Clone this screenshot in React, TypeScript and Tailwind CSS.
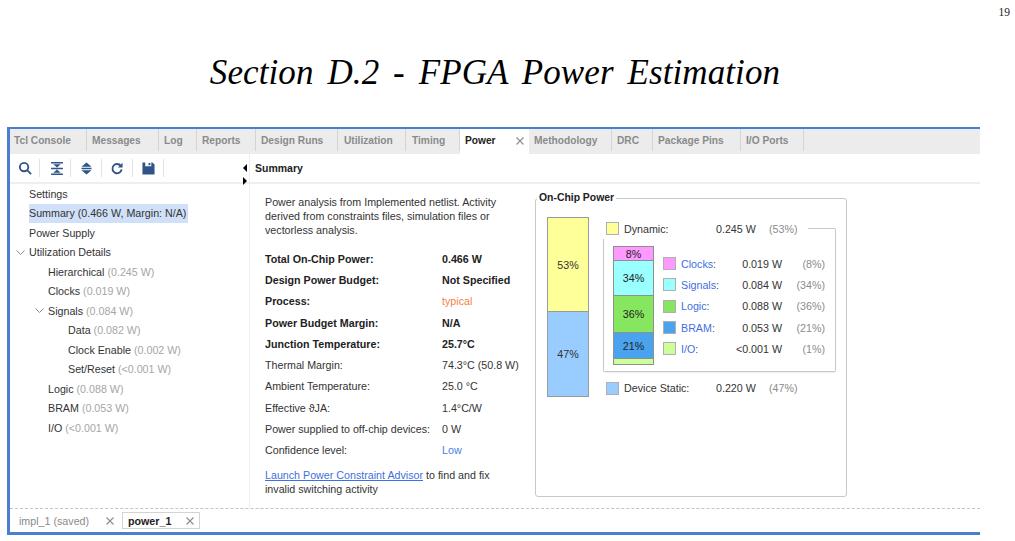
const tabs = [
  { name: "Tcl Console", w: "w-[77px] pl-[4px]" },
  { name: "Messages", w: "w-[72px] pl-[5px]" },
  { name: "Log", w: "w-[38px] pl-[5px]" },
  { name: "Reports", w: "w-[59px] pl-[5px]" },
  { name: "Design Runs", w: "w-[82px] pl-[5px]" },
  { name: "Utilization", w: "w-[68px] pl-[6px]" },
  { name: "Timing", w: "w-[54px] pl-[6px]" },
];

const tabsAfter = [
  { name: "Methodology", w: "w-[83px] pl-[5px]" },
  { name: "DRC", w: "w-[41px] pl-[5px]" },
  { name: "Package Pins", w: "w-[88px] pl-[5px]" },
  { name: "I/O Ports", w: "w-[63px] pl-[5px]" },
];

const tree = [
  { label: "Settings", indent: "pl-[19px]" },
  { label: "Summary (0.466 W, Margin: N/A)", indent: "pl-[19px]", selected: true },
  { label: "Power Supply", indent: "pl-[19px]" },
  { label: "Utilization Details", indent: "pl-[19px]", open: true },
  { label: "Hierarchical", note: "(0.245 W)", indent: "pl-[38px]" },
  { label: "Clocks", note: "(0.019 W)", indent: "pl-[38px]" },
  { label: "Signals", note: "(0.084 W)", indent: "pl-[38px]", open: true },
  { label: "Data", note: "(0.082 W)", indent: "pl-[58px]" },
  { label: "Clock Enable", note: "(0.002 W)", indent: "pl-[58px]" },
  { label: "Set/Reset", note: "(<0.001 W)", indent: "pl-[58px]" },
  { label: "Logic", note: "(0.088 W)", indent: "pl-[38px]" },
  { label: "BRAM", note: "(0.053 W)", indent: "pl-[38px]" },
  { label: "I/O", note: "(<0.001 W)", indent: "pl-[38px]" },
];

const summaryRows = [
  { k: "Total On-Chip Power:", v: "0.466 W", bold: true },
  { k: "Design Power Budget:", v: "Not Specified", bold: true },
  { k: "Process:", v: "typical", bold: true, tone: "font-normal text-[#f77f3f]" },
  { k: "Power Budget Margin:", v: "N/A", bold: true },
  { k: "Junction Temperature:", v: "25.7°C", bold: true },
  { k: "Thermal Margin:", v: "74.3°C (50.8 W)" },
  { k: "Ambient Temperature:", v: "25.0 °C" },
  { k: "Effective ϑJA:", v: "1.4°C/W" },
  { k: "Power supplied to off-chip devices:", v: "0 W" },
  { k: "Confidence level:", v: "Low", tone: "text-[#3f7fe8]" },
];

const dynamicRows = [
  { name: "Clocks", value: "0.019 W", pct: "(8%)", color: "bg-[#ff99ff]" },
  { name: "Signals", value: "0.084 W", pct: "(34%)", color: "bg-[#99ffff]" },
  { name: "Logic", value: "0.088 W", pct: "(36%)", color: "bg-[#86e65f]" },
  { name: "BRAM", value: "0.053 W", pct: "(21%)", color: "bg-[#4aa3ee]" },
  { name: "I/O", value: "<0.001 W", pct: "(1%)", color: "bg-[#ccff99]" },
];

const stack = [
  { label: "8%", color: "bg-[#ff99ff]", h: "h-[14px]" },
  { label: "34%", color: "bg-[#99ffff]", h: "h-[35px]" },
  { label: "36%", color: "bg-[#86e65f]", h: "h-[37px]" },
  { label: "21%", color: "bg-[#4aa3ee]", h: "h-[26px]" },
  { label: "", color: "bg-[#ccff99]", h: "h-[5px]" },
];

function Chevron() {
  return (
    <svg width="9" height="6" viewBox="0 0 9 6" className="absolute -left-[13px] top-[7px]" fill="none" stroke="#8a8a8a">
      <path d="M0.5 0.5L4.5 4.5L8.5 0.5" />
    </svg>
  );
}

function CloseX() {
  return (
    <svg width="8" height="8" viewBox="0 0 8 8" fill="none" stroke="#8c8c8c" strokeWidth="1.1">
      <path d="M0.5 0.5L7.5 7.5M7.5 0.5L0.5 7.5" />
    </svg>
  );
}

function ToolSep() {
  return <div className="h-[18px] w-px bg-[#e2e2e2]" />;
}

function Toolbar() {
  return (
    <div className="flex h-[30px] items-center border-b-2 border-[#eeeeee] pl-[8px] text-[#2f5488]">
      <svg width="14" height="14" viewBox="0 0 15 15" fill="none" stroke="currentColor" strokeWidth="2">
        <circle cx="6.5" cy="6.5" r="4.5" />
        <path d="M10 10L14 14" />
      </svg>
      <div className="ml-[7px] mr-[10px]"><ToolSep /></div>
      <svg width="14" height="13" viewBox="0 0 13 14" fill="currentColor" preserveAspectRatio="none">
        <path d="M1 0H12V1.5H1zM3 2.5H10L6.5 6zM1 6.3H12V7.7H1zM6.5 8L10 11.5H3zM1 12.5H12V14H1z" />
      </svg>
      <div className="ml-[6px] mr-[10px]"><ToolSep /></div>
      <svg width="11" height="13" viewBox="0 0 11 14" fill="currentColor" preserveAspectRatio="none">
        <path d="M5.5 0.5L10.5 5H0.5zM0.5 6.2H10.5V7.8H0.5zM0.5 9H10.5L5.5 13.5z" />
      </svg>
      <div className="ml-[9px] mr-[9px]"><ToolSep /></div>
      <svg width="12" height="13" viewBox="0 0 13 14" fill="none" stroke="currentColor" strokeWidth="2">
        <path d="M10.6 4.2A5 5 0 1 0 11.5 8" />
        <path d="M12.5 0.8V6H7.5" fill="currentColor" stroke="none" />
      </svg>
      <div className="ml-[9px] mr-[9px]"><ToolSep /></div>
      <svg width="13" height="13" viewBox="0 0 14 14" fill="currentColor">
        <path d="M0.5 0.5H3.5V4.5H10V0.5H11.2L13.5 2.8V13.5H0.5zM7 1H9V3.5H7z" />
      </svg>
      <div className="ml-[8px]"><ToolSep /></div>
    </div>
  );
}

function OnChipPower() {
  return (
    <div className="relative mt-[14px] ml-[285px] h-[299px] w-[312px] rounded-[3px] border border-[#c8c8c8] text-[#333333]">
      <span className="absolute -top-[8px] left-[1px] bg-white px-[2px] text-[10.4px] leading-[14px] font-bold text-[#222222]">
        On-Chip Power
      </span>
      <div className="flex pt-[18px] pl-[11px]">
        <div className="flex h-[180px] w-[42px] flex-col border border-[#9a9a9a]">
          <div className="flex h-[94px] items-center justify-center border-b border-[#9a9a9a] bg-[#ffff99]">53%</div>
          <div className="flex flex-1 items-center justify-center bg-[#99ccff]">47%</div>
        </div>
        <div className="mt-[5px] ml-[14px] w-[233px]">
          <div className="flex h-[17px]">
            <div className="flex h-[13px] flex-1 items-center pl-[3px]">
              <div className="h-[13px] w-[13px] border border-[#b0b0b0] bg-[#ffff99]" />
              <span className="ml-[5px] w-[92px]">Dynamic:</span>
              <span className="w-[53px]">0.245 W</span>
              <span className="text-[#8c8c8c]">(53%)</span>
            </div>
            <div className="mt-[6px] w-[28px] rounded-tr-[2px] border-t border-r border-[#c8c8c8]" />
          </div>
          <div className="flex h-[133px] rounded-b-[2px] border-r border-b border-l border-[#c8c8c8] pt-[7px] pl-[9px] shadow-[0_1px_1px_#eeeeee]">
            <div className="flex h-[119px] w-[41px] flex-col border border-[#8f8f8f]">
              {stack.map((s) => (
                <div key={s.color} className={`${s.h} ${s.color} flex items-center justify-center border-b border-[#8f8f8f] text-[#222222] last:border-b-0`}>
                  {s.label}
                </div>
              ))}
            </div>
            <div className="ml-[9px] flex flex-col pt-[7px]">
              {dynamicRows.map((r) => (
                <div key={r.name} className="flex h-[21.3px] items-center">
                  <div className={`h-[13px] w-[13px] border border-[#b0b0b0] ${r.color}`} />
                  <span className="ml-[5px] w-[48px] text-[#3f6fe0]">
                    {r.name}<span className="text-[#555555]">:</span>
                  </span>
                  <span className="w-[53px] text-right">{r.value}</span>
                  <span className="w-[43px] text-right text-[#8c8c8c]">{r.pct}</span>
                </div>
              ))}
            </div>
          </div>
          <div className="mt-[9px] flex items-center pl-[3px]">
            <div className="h-[13px] w-[13px] border border-[#b0b0b0] bg-[#99ccff]" />
            <span className="ml-[5px] w-[92px]">Device Static:</span>
            <span className="w-[53px]">0.220 W</span>
            <span className="text-[#8c8c8c]">(47%)</span>
          </div>
        </div>
      </div>
    </div>
  );
}

export default function App() {
  return (
    <div className="h-[541px] w-[1015px] overflow-hidden bg-white font-['Liberation_Sans',Arial,sans-serif] text-[10.7px] leading-[14px]">
      {/* Paper header */}
      <div className="flex h-[127px] flex-col">
        <div className="pt-[5px] pr-[5px] text-right font-['Liberation_Serif',serif] text-[11.5px] leading-[14px] text-[#222222]">19</div>
        <h1 className="mt-[34px] pr-[25px] text-center font-['Liberation_Serif',serif] text-[35px] leading-[40px] font-normal tracking-[0.1px] text-black italic [word-spacing:5px]">
          Section D.2 - FPGA Power Estimation
        </h1>
      </div>

      {/* Vivado window */}
      <div className="ml-[7px] flex h-[408px] w-[973px] flex-col border-t-[2px] border-b-[3px] border-l-[3px] border-[#4a7fcf]">
        {/* Tabs */}
        <div className="flex h-[25px] bg-[#ececec] text-[10.2px] font-bold text-[#8a8a8a]">
          {tabs.map((t) => (
            <div key={t.name} className={`${t.w} flex h-[22px] items-center border-r border-[#d4d4d4] pt-[2px]`}>
              {t.name}
            </div>
          ))}
          <div className="flex w-[69px] items-center justify-between bg-white pr-[5px] pb-[1px] pl-[5px] text-[#222222]">
            Power
            <CloseX />
          </div>
          {tabsAfter.map((t) => (
            <div key={t.name} className={`${t.w} flex h-[22px] items-center border-r border-[#d4d4d4] pt-[2px]`}>
              {t.name}
            </div>
          ))}
        </div>

        <div className="flex min-h-0 flex-1 border-b border-dashed border-[#c4c4c4]">
          {/* Left tree */}
          <div className="relative w-[240px] shrink-0 border-r border-[#eeeeee]">
            <Toolbar />
            <div className="text-[#333333]">
              {tree.map((row) => (
                <div key={row.label} className={`${row.indent} flex h-[19.5px] items-center`}>
                  <div className={`relative flex h-[19.5px] items-center ${row.selected ? "bg-[#cfe0f8] pr-[2px]" : ""}`}>
                    {row.open && <Chevron />}
                    {row.label}
                    {row.note && <span className="ml-[3px] text-[#a6a6a6]">{row.note}</span>}
                  </div>
                </div>
              ))}
            </div>
            {/* Splitter arrows */}
            <div className="absolute top-[10px] right-[2px] h-0 w-0 border-y-[4px] border-r-[4px] border-y-transparent border-r-black" />
            <div className="absolute top-[23px] right-[2px] h-0 w-0 border-y-[4px] border-l-[4px] border-y-transparent border-l-black" />
          </div>

          {/* Summary */}
          <div className="min-w-0 flex-1">
            <div className="flex h-[30px] items-center border-b-2 border-[#eeeeee] pl-[5px] text-[10.5px] font-bold text-[#222222]">Summary</div>
            <div className="flex">
              <div className="w-[270px] shrink-0 pt-[11px] pl-[15px] text-[#333333]">
                <p className="w-[250px]">
                  Power analysis from Implemented netlist. Activity derived from constraints files, simulation files or vectorless analysis.
                </p>
                <div className="mt-[11px]">
                  {summaryRows.map((r) => (
                    <div key={r.k} className={`flex h-[21.3px] items-center ${r.bold ? "font-bold text-[#222222]" : ""}`}>
                      <span className="w-[177px] shrink-0">{r.k}</span>
                      <span className={r.tone}>{r.v}</span>
                    </div>
                  ))}
                </div>
                <div className="mt-[7px]">
                  <div>
                    <span className="text-[#3f6fe0] underline">Launch Power Constraint Advisor</span> to find and fix
                  </div>
                  <div>invalid switching activity</div>
                </div>
              </div>
              <div className="-ml-[270px]">
                <OnChipPower />
              </div>
            </div>
          </div>
        </div>

        {/* Bottom tabs */}
        <div className="flex h-[23px] shrink-0 items-center pl-[9px] text-[#8a8a8a]">
          <span className="w-[87px]">impl_1 (saved)</span>
          <CloseX />
          <div className="ml-[8px] flex h-[17px] w-[78px] items-center justify-between border border-[#d4d4d4] pr-[5px] pl-[5px] font-bold text-[#222222]">
            power_1
            <CloseX />
          </div>
        </div>
      </div>
    </div>
  );
}
